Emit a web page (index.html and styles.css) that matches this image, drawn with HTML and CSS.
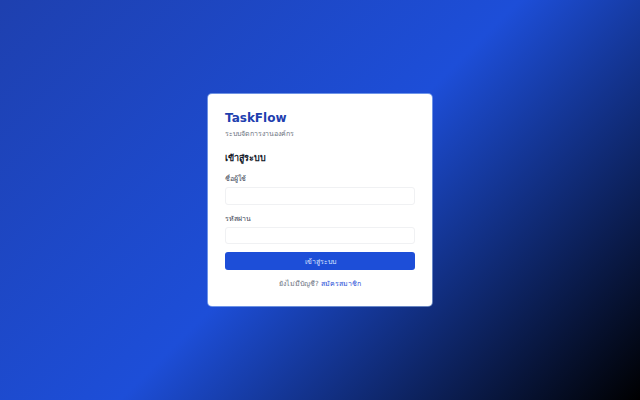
FILE: index.html
```html
<!DOCTYPE html>
<html lang="th">
<head>
<meta charset="utf-8">
<title>TaskFlow - เข้าสู่ระบบ</title>
<link rel="stylesheet" href="styles.css">
</head>
<body>
<main class="page">
  <form class="card">
    <h1 class="brand">TaskFlow</h1>
    <p class="tagline">ระบบจัดการงานองค์กร</p>
    <h2 class="heading">เข้าสู่ระบบ</h2>
    <label class="label" for="user">ชื่อผู้ใช้</label>
    <input class="input" id="user" type="text">
    <label class="label label-gap" for="pass">รหัสผ่าน</label>
    <input class="input" id="pass" type="password">
    <button class="btn" type="button">เข้าสู่ระบบ</button>
    <p class="footer">ยังไม่มีบัญชี? <a class="link" href="#">สมัครสมาชิก</a></p>
  </form>
</main>
</body>
</html>
```
FILE: styles.css
```css
* { box-sizing: border-box; }
html, body { margin: 0; padding: 0; height: 100%; }
body {
  font-family: "DejaVu Sans", "Noto Sans", sans-serif;
  background: linear-gradient(135deg, #1e40af 0%, #1d4ed8 50%, #000000 100%);
}
.page {
  height: 100%;
  display: flex;
  align-items: center;
  justify-content: center;
}
.card {
  width: 224px;
  height: 212px;
  background: #ffffff;
  border-radius: 4px;
  padding: 16px 17px 16px 17px;
  display: flex;
  flex-direction: column;
  box-shadow: 0 0 0 1px rgba(191, 219, 254, 0.5);
}
.brand {
  margin: 0;
  font-size: 12px;
  line-height: 16px;
  font-weight: 700;
  color: #1e40af;
}
.tagline {
  margin: 2px 0 0;
  font-size: 7px;
  line-height: 12px;
  color: #6b7280;
}
.heading {
  margin: 11px 0 0;
  font-size: 9px;
  line-height: 14px;
  font-weight: 700;
  color: #111827;
}
.label {
  margin-top: 8px;
  font-size: 7px;
  line-height: 12px;
  color: #374151;
}
.input {
  margin-top: 2px;
  height: 19px;
  width: 100%;
  border: 1px solid #f0f1f3;
  border-radius: 3px;
  background: #ffffff;
  padding: 0 6px;
  font-size: 8px;
}
.btn {
  margin-top: 8px;
  height: 18px;
  width: 100%;
  border: 0;
  border-radius: 3px;
  background: #1d4ed8;
  color: #dbe6ff;
  font-family: inherit;
  font-size: 7px;
  line-height: 18px;
  padding: 1px 0 0;
}
.footer {
  margin: 8px 0 0;
  text-align: center;
  font-size: 7px;
  line-height: 12px;
  color: #6b7280;
}
.link {
  color: #1d4ed8;
  text-decoration: none;
}
```
